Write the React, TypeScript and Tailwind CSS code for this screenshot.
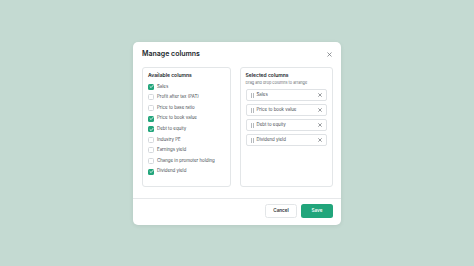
import React from "react";

const available = [
  { label: "Sales", checked: true },
  { label: "Profit after tax (PAT)", checked: false },
  { label: "Price to base ratio", checked: false },
  { label: "Price to book value", checked: true },
  { label: "Debt to equity", checked: true },
  { label: "Industry PE", checked: false },
  { label: "Earnings yield", checked: false },
  { label: "Change in promoter holding", checked: false },
  { label: "Dividend yield", checked: true },
];

const selected = ["Sales", "Price to book value", "Debt to equity", "Dividend yield"];

function Check({ checked }: { checked: boolean }) {
  if (checked) {
    return (
      <div className="w-[6px] h-[6px] rounded-[1.5px] bg-[#22a57b] flex items-center justify-center shrink-0">
        <svg width="5" height="5" viewBox="0 0 10 10">
          <path d="M2 5.2 L4.2 7.2 L8 2.8" fill="none" stroke="white" strokeWidth="1.6" strokeLinecap="round" strokeLinejoin="round" />
        </svg>
      </div>
    );
  }
  return <div className="w-[6px] h-[6px] rounded-[1.5px] border-[0.5px] border-[#d4d8dc] bg-white shrink-0" />;
}

function Grip() {
  return (
    <svg width="3" height="5" viewBox="0 0 3 5" className="shrink-0">
      <rect x="0" y="0" width="0.8" height="5" fill="#a3a8ad" />
      <rect x="2" y="0" width="0.8" height="5" fill="#a3a8ad" />
    </svg>
  );
}

function Cross({ size = 4, color = "#6b7280", w = 1 }: { size?: number; color?: string; w?: number }) {
  return (
    <svg width={size} height={size} viewBox="0 0 10 10" className="shrink-0">
      <path d="M1.5 1.5 L8.5 8.5 M8.5 1.5 L1.5 8.5" stroke={color} strokeWidth={w * 1.6} strokeLinecap="round" />
    </svg>
  );
}

export default function App() {
  return (
    <div
      className="w-[474px] h-[266px] bg-[#c4dad2] flex items-center justify-center"
      style={{ fontFamily: "Inter, 'Noto Sans', sans-serif" }}
    >
      <div className="w-[208px] h-[183px] bg-white rounded-[5px] shadow-[0_1px_4px_rgba(0,0,0,0.08)] flex flex-col">
        <div className="h-[25px] flex items-center justify-between pl-[9px] pr-[9px]">
          <span className="text-[7px] font-semibold text-[#22272c] leading-[8px]">Manage columns</span>
          <Cross size={5} color="#6b7075" w={0.9} />
        </div>
        <div className="flex gap-[9px] pl-[9px] pr-[8px] h-[120px]">
          <div className="flex-1 border-[0.5px] border-[#e3e6e8] rounded-[3px] pl-[5px] pt-[5px]">
            <div className="text-[5px] font-semibold text-[#22272c] leading-none h-[6px] flex items-center">Available columns</div>
            <div className="flex flex-col mt-[3px]">
              {available.map((a) => (
                <div key={a.label} className="h-[10.6px] flex items-center gap-[3px]">
                  <Check checked={a.checked} />
                  <span className="text-[4.4px] text-[#474c52] leading-none">{a.label}</span>
                </div>
              ))}
            </div>
          </div>
          <div className="flex-1 border-[0.5px] border-[#e3e6e8] rounded-[3px] px-[5px] pt-[5px]">
            <div className="text-[5px] font-semibold text-[#22272c] leading-none h-[6px] flex items-center">Selected columns</div>
            <div className="text-[3.8px] text-[#6b7075] leading-none mt-[2.5px]">Drag and drop columns to arrange</div>
            <div className="flex flex-col gap-[3.3px] mt-[4.5px]">
              {selected.map((s) => (
                <div key={s} className="h-[11.7px] border-[0.5px] border-[#dfe2e5] rounded-[2px] flex items-center pl-[4px] pr-[4px] gap-[3px]">
                  <Grip />
                  <span className="text-[4.4px] text-[#474c52] leading-none flex-1">{s}</span>
                  <Cross size={4} color="#5d6267" w={1} />
                </div>
              ))}
            </div>
          </div>
        </div>
        <div className="mt-[11px] h-[0.5px] bg-[#e6e8ea]" />
        <div className="flex-1 flex items-center justify-end gap-[4px] pr-[8px]">
          <button className="w-[32px] h-[14px] border-[0.5px] border-[#e3e6e8] rounded-[2.5px] bg-white text-[4.6px] font-semibold text-[#2b3036] flex items-center justify-center">
            Cancel
          </button>
          <button className="w-[32px] h-[14px] rounded-[2.5px] bg-[#21a57b] text-[4.6px] font-semibold text-white flex items-center justify-center">
            Save
          </button>
        </div>
      </div>
    </div>
  );
}
